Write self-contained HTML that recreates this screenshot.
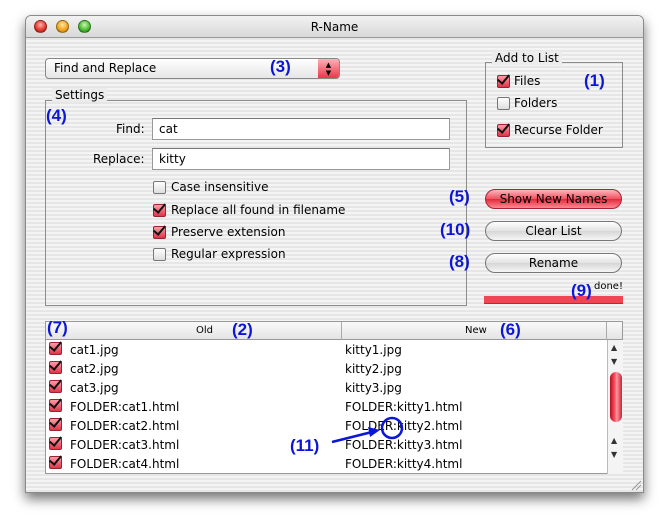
<!DOCTYPE html>
<html><head><meta charset="utf-8"><style>
*{margin:0;padding:0;box-sizing:border-box}
body{width:671px;height:529px;background:#fff;position:relative;overflow:hidden;font-family:"Lucida Grande","DejaVu Sans","Liberation Sans",sans-serif;font-size:12px;color:#000}
.a{position:absolute}
.win{left:25px;top:15px;width:619px;height:478px;border:1px solid #8a8a8a;border-radius:6px 6px 0 0;box-shadow:0 6px 12px rgba(0,0,0,.55);background:repeating-linear-gradient(#f4f4f4 0 2px,#e6e6e6 2px 4px);overflow:hidden}
.title{left:0;top:0;width:100%;height:22px;background:linear-gradient(#f2f2f2,#d8d8d8);border-bottom:1px solid #9a9a9a;text-align:center;font-size:12px;line-height:22px}
.tl{width:13px;height:13px;border-radius:50%;top:4px;border:1px solid rgba(0,0,0,.35)}
.lbl{color:#0b16d6;font-weight:bold;font-family:"Liberation Sans",sans-serif;font-size:17px}
.box{border:1px solid #8c8c8c}
.leg{background:#ececec;padding:0 3px;font-size:12px}
.cb{width:13px;height:13px;border:1px solid #777;border-radius:2px;background:linear-gradient(#fff,#ddd)}
.cb.on{background:linear-gradient(#ff9aa6,#e23448);border-color:#923}
.cb.on::after{content:"";position:absolute;left:2px;top:-4px;width:5px;height:10px;border:solid #111;border-width:0 2.5px 2.5px 0;transform:rotate(40deg)}
.t{font-size:12px;white-space:nowrap}
.btn{height:20px;border:1px solid #777;border-radius:10px;background:linear-gradient(#fff,#e2e2e2 50%,#d6d6d6 51%,#f6f6f6);text-align:center;line-height:18px;font-size:12px}
.btn.red{background:linear-gradient(#ffb4bc,#f0505e 50%,#e22a3c 51%,#ff8890);border-color:#a23}
.field{height:22px;background:#fff;border:1px solid #999;border-top-color:#777;padding-left:6px;line-height:20px}
.row{left:0;width:100%;height:19px}
</style></head><body>
<div class="a win">
 <div class="a title">R-Name</div>
 <div class="a tl" style="left:8px;background:radial-gradient(circle at 50% 35%,#ffb0a8,#e0332a 60%,#a01810)"></div>
 <div class="a tl" style="left:30px;background:radial-gradient(circle at 50% 35%,#ffe8a0,#f0a018 60%,#b06808)"></div>
 <div class="a tl" style="left:52px;background:radial-gradient(circle at 50% 35%,#c8f8b0,#48b830 60%,#207010)"></div>
</div>
<!-- popup -->
<div class="a" style="left:45px;top:58px;width:295px;height:21px;border:1px solid #888;border-radius:4px;background:linear-gradient(#fff,#e6e6e6);padding-left:8px;line-height:19px">Find and Replace</div>
<div class="a" style="left:318px;top:59px;width:21px;height:19px;border-radius:0 3px 3px 0;background:linear-gradient(#ffb0b8,#e83848);font-size:7px;text-align:center;line-height:8px;padding-top:2px">▲<br>▼</div>
<div class="a lbl" style="left:270px;top:57px">(3)</div>
<!-- settings -->
<div class="a box" style="left:45px;top:100px;width:422px;height:206px"></div>
<div class="a leg" style="left:52px;top:88px">Settings</div>
<div class="a lbl" style="left:46px;top:106px">(4)</div>
<div class="a t" style="left:116px;top:122px">Find:</div>
<div class="a field" style="left:152px;top:118px;width:298px">cat</div>
<div class="a t" style="left:93px;top:152px">Replace:</div>
<div class="a field" style="left:152px;top:148px;width:298px">kitty</div>
<div class="a cb" style="left:153px;top:181px"></div><div class="a t" style="left:171px;top:180px">Case insensitive</div>
<div class="a cb on" style="left:153px;top:204px"></div><div class="a t" style="left:171px;top:203px">Replace all found in filename</div>
<div class="a cb on" style="left:153px;top:226px"></div><div class="a t" style="left:171px;top:225px">Preserve extension</div>
<div class="a cb" style="left:153px;top:248px"></div><div class="a t" style="left:171px;top:247px">Regular expression</div>
<!-- add to list -->
<div class="a box" style="left:485px;top:62px;width:138px;height:86px"></div>
<div class="a leg" style="left:492px;top:51px">Add to List</div>
<div class="a cb on" style="left:497px;top:75px"></div><div class="a t" style="left:514px;top:74px">Files</div>
<div class="a cb" style="left:497px;top:97px"></div><div class="a t" style="left:514px;top:96px">Folders</div>
<div class="a cb on" style="left:497px;top:124px"></div><div class="a t" style="left:514px;top:123px">Recurse Folder</div>
<div class="a lbl" style="left:584px;top:71px">(1)</div>
<!-- buttons -->
<div class="a btn red" style="left:485px;top:189px;width:137px">Show New Names</div>
<div class="a btn" style="left:485px;top:221px;width:137px">Clear List</div>
<div class="a btn" style="left:485px;top:253px;width:137px">Rename</div>
<div class="a lbl" style="left:449px;top:187px">(5)</div>
<div class="a lbl" style="left:440px;top:220px">(10)</div>
<div class="a lbl" style="left:449px;top:252px">(8)</div>
<div class="a t" style="left:594px;top:281px;font-size:10px">done!</div>
<div class="a" style="left:484px;top:296px;width:139px;height:8px;background:#f04555;border-bottom:1px solid #c22"></div>
<div class="a lbl" style="left:571px;top:281px">(9)</div>
<!-- list -->
<div class="a" style="left:45px;top:321px;width:578px;height:153px;border:1px solid #999;background:#fff">
 <div class="a" style="left:0;top:0;width:100%;height:18px;background:linear-gradient(#fafafa,#e4e4e4);border-bottom:1px solid #999"></div>
 <div class="a" style="left:295px;top:0;width:1px;height:18px;background:#aaa"></div>
 <div class="a" style="left:560px;top:0;width:1px;height:18px;background:#aaa"></div>
 <div class="a t" style="left:150px;top:3px;font-size:10px">Old</div>
 <div class="a t" style="left:419px;top:3px;font-size:10px">New</div>
 <div class="a" style="left:561px;top:18px;width:16px;height:134px;border-left:1px solid #bbb;background:#f4f4f4;font-size:8px;text-align:center;color:#333">
  <div class="a" style="left:3px;top:3px">▲</div><div class="a" style="left:3px;top:17px">▼</div>
  <div class="a" style="left:2px;top:32px;width:12px;height:50px;border-radius:6px;background:linear-gradient(90deg,#b01020,#ff5060 40%,#ff9aa4 55%,#d02030)"></div>
  <div class="a" style="left:3px;top:96px">▲</div><div class="a" style="left:3px;top:110px">▼</div>
 </div>
</div>
<div class="a lbl" style="left:47px;top:318px">(7)</div>
<div class="a lbl" style="left:232px;top:320px">(2)</div>
<div class="a lbl" style="left:500px;top:320px">(6)</div>
<div class="a" style="left:49px;top:340px;width:400px;height:133px">
 <div class="a cb on" style="left:0;top:2px"></div><div class="a t" style="left:21px;top:3px">cat1.jpg</div><div class="a t" style="left:296px;top:3px">kitty1.jpg</div>
 <div class="a cb on" style="left:0;top:21px"></div><div class="a t" style="left:21px;top:22px">cat2.jpg</div><div class="a t" style="left:296px;top:22px">kitty2.jpg</div>
 <div class="a cb on" style="left:0;top:40px"></div><div class="a t" style="left:21px;top:41px">cat3.jpg</div><div class="a t" style="left:296px;top:41px">kitty3.jpg</div>
 <div class="a cb on" style="left:0;top:59px"></div><div class="a t" style="left:21px;top:60px">FOLDER:cat1.html</div><div class="a t" style="left:296px;top:60px">FOLDER:kitty1.html</div>
 <div class="a cb on" style="left:0;top:78px"></div><div class="a t" style="left:21px;top:79px">FOLDER:cat2.html</div><div class="a t" style="left:296px;top:79px">FOLDER:kitty2.html</div>
 <div class="a cb on" style="left:0;top:97px"></div><div class="a t" style="left:21px;top:98px">FOLDER:cat3.html</div><div class="a t" style="left:296px;top:98px">FOLDER:kitty3.html</div>
 <div class="a cb on" style="left:0;top:116px"></div><div class="a t" style="left:21px;top:117px">FOLDER:cat4.html</div><div class="a t" style="left:296px;top:117px">FOLDER:kitty4.html</div>
</div>
<svg class="a" style="left:0;top:0" width="671" height="529">
 <ellipse cx="392" cy="428" rx="10" ry="10" fill="none" stroke="#0b16d6" stroke-width="2.5"/>
 <line x1="332" y1="442" x2="372" y2="432" stroke="#0b16d6" stroke-width="2.5"/>
 <polygon points="380,430 368,427 370,437" fill="#0b16d6"/>
 <g stroke="#999" stroke-width="1"><line x1="632" y1="490" x2="641" y2="481"/><line x1="636" y1="490" x2="641" y2="485"/></g>
</svg>
<div class="a lbl" style="left:290px;top:436px">(11)</div>
</body></html>
